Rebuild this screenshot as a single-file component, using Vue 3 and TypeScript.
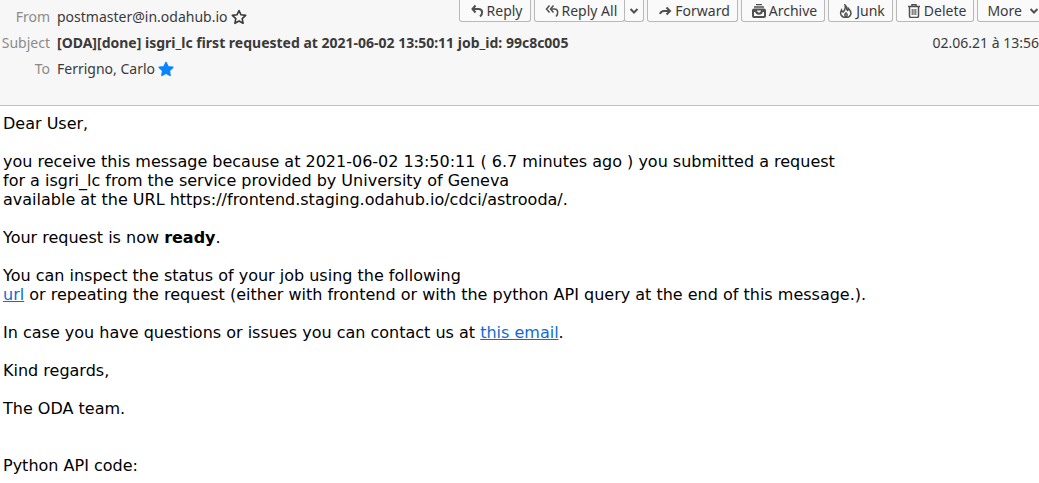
<script setup lang="ts">
interface Action {
  id: string
  label: string
  icon?: string[]
  split?: boolean
  menu?: boolean
}

const actions: Action[] = [
  { id: 'reply', label: 'Reply', icon: ['M5.5 1.5L2.5 5l3 3.5', 'M3 5h5.5c4.500 0 4.500 5 1.500 7.500'] },
  {
    id: 'reply-all',
    label: 'Reply All',
    icon: ['M4.5 1.5L1.5 5l3 3.5', 'M8.5 1.5L5.5 5l3 3.5', 'M6 5h3.5c4 0 4 5 1.500 7.500'],
    split: true,
  },
  { id: 'forward', label: 'Forward', icon: ['M8.5 3.500L12 7l-3.500 3.500', 'M12 7H6Q3 7 2 10'] },
  {
    id: 'archive',
    label: 'Archive',
    icon: ['M4 .5h6', 'M2 3h10', 'M2 5.500h10a1 1 0 0 1 1 1V12a1 1 0 0 1-1 1H2a1 1 0 0 1-1-1V6.500a1 1 0 0 1 1-1z', 'M1.500 7h2.500c.5 3.500 5.500 3.500 6 0h2.500'],
  },
  {
    id: 'junk',
    label: 'Junk',
    icon: ['M6 1c3 2 .5 4 2.500 5.500C9.500 6 9.300 5 9.300 4.300c5 5 2 9.200-2.300 9.200-5 0-6.500-4-4.500-7.500.3 1.500 1 2 1.800 2C5.500 6.500 7 4 6 1z', 'M7 13c-2-1.500-1-3 0-4 1 1 2 2.500 0 4z'],
  },
  {
    id: 'delete',
    label: 'Delete',
    icon: ['M1 2.500h12', 'M5 2.500V.8h4v1.700', 'M2.500 3V12a1.500 1.500 0 0 0 1.500 1.500h6a1.500 1.500 0 0 0 1.500-1.500V3', 'M5.200 5v6M7 5v6M8.800 5v6'],
  },
  { id: 'more', label: 'More', menu: true },
]

const starPath = 'M8 1.5l2 4.300 4.700.6-3.500 3.200.9 4.700L8 12l-4.100 2.300.9-4.700L1.300 6.400 6 5.800z'
</script>

<template>
  <div class="message">
    <header class="header">
      <div class="toolbar" role="toolbar" aria-label="Message actions">
        <div v-for="a in actions" :key="a.id" class="group">
          <button type="button" class="action" :class="a.id">
            <svg v-if="a.icon" class="icon" viewBox="0 0 14 14" aria-hidden="true">
              <path v-for="d in a.icon" :key="d" :d="d" />
            </svg>
            <span>{{ a.label }}</span>
            <svg v-if="a.menu" class="chevron" viewBox="0 0 10 10" aria-hidden="true"><path d="M1.5 3L5 6.5 8.5 3" /></svg>
          </button>
          <button v-if="a.split" type="button" class="action drop" :aria-label="a.label + ' options'">
            <svg class="chevron" viewBox="0 0 10 10" aria-hidden="true"><path d="M1.5 3L5 6.5 8.5 3" /></svg>
          </button>
        </div>
      </div>
      <time class="date" datetime="2021-06-02T13:56">02.06.21 à 13:56</time>
      <dl class="fields">
        <dt>From</dt>
        <dd>
          postmaster@in.odahub.io
          <button type="button" class="star" aria-label="Add to address book">
            <svg viewBox="0 0 16 16"><path :d="starPath" /></svg>
          </button>
        </dd>
        <dt>Subject</dt>
        <dd class="subject">[ODA][done] isgri_lc first requested at 2021-06-02 13:50:11 job_id: 99c8c005</dd>
        <dt>To</dt>
        <dd>
          Ferrigno, Carlo
          <button type="button" class="star known" aria-label="Edit contact">
            <svg viewBox="0 0 16 16"><path :d="starPath" /></svg>
          </button>
        </dd>
      </dl>
    </header>
    <main class="body">
      <p>Dear User,</p>
      <p>
        you receive this message because at 2021-06-02 13:50:11 ( 6.7 minutes ago ) you submitted a request<br />
        for a isgri_lc from the service provided by University of Geneva<br />
        available at the URL https://frontend.staging.odahub.io/cdci/astrooda/.
      </p>
      <p>Your request is now <b>ready</b>.</p>
      <p>
        You can inspect the status of your job using the following<br />
        <a href="#status">url</a> or repeating the request (either with frontend or with the python API query at the end of this message.).
      </p>
      <p>In case you have questions or issues you can contact us at <a href="#contact">this email</a>.</p>
      <p>Kind regards,</p>
      <p>The ODA team.</p>
      <p class="code-title">Python API code:</p>
    </main>
  </div>
</template>

<style>
body {
  margin: 0;
  background: #fff;
}
</style>

<style scoped>
.message {
  overflow: hidden;
}
.header {
  display: grid;
  grid-template-columns: minmax(0, 1fr) auto;
  grid-template-rows: 30px auto;
  background: #f7f7f7;
  border-bottom: 1px solid #c2c2c2;
  color: #3a3a3a;
  font: 14px/26px "Noto Sans", "Open Sans", sans-serif;
}
.fields {
  grid-area: 1 / 1 / 3 / 2;
  display: grid;
  grid-template-columns: 50px minmax(0, 1fr);
  column-gap: 7px;
  grid-auto-rows: 26px;
  margin: 0;
  padding: 4px 0 23px;
  white-space: nowrap;
}
.fields dt {
  color: #8b8b8b;
  text-align: right;
}
.fields dd {
  display: flex;
  align-items: center;
  gap: 3px;
  margin: 0;
}
.fields .subject {
  font-weight: 700;
}
.star {
  display: block;
  width: 16px;
  height: 16px;
  padding: 0;
  border: 0;
  background: none;
}
.star svg {
  display: block;
  fill: none;
  stroke: #3a3a3a;
  stroke-width: 1.6;
  stroke-linejoin: round;
}
.star.known svg {
  fill: #0a84ff;
  stroke: #0a84ff;
}
.toolbar {
  grid-area: 1 / 2;
  justify-self: end;
  display: flex;
  align-items: flex-start;
  gap: 3px;
  height: 22px;
  margin-right: -7px;
}
.group {
  display: flex;
}
.action {
  display: flex;
  align-items: center;
  gap: 3px;
  height: 22px;
  padding: 0 7px 0 10px;
  border: 1px solid #b8b8b8;
  border-top: 0;
  border-radius: 0 0 3px 3px;
  background: #fafafa;
  color: inherit;
  font: inherit;
  line-height: 20px;
  white-space: nowrap;
}
.action.more {
  gap: 7px;
  padding: 0 6px 0 9px;
}
.action.drop {
  margin-left: -1px;
  padding: 0 4px;
}
.icon {
  width: 14px;
  height: 14px;
}
.chevron {
  width: 10px;
  height: 10px;
}
.icon,
.chevron {
  flex: none;
  fill: none;
  stroke: #505050;
  stroke-width: 1.5;
}
.chevron,
.reply .icon,
.forward .icon {
  stroke-width: 2;
}
.archive .icon path:nth-child(n + 3) {
  stroke-width: 2;
}
.delete .icon path:last-child {
  stroke-width: 1;
}
.date {
  grid-area: 2 / 2;
  justify-self: end;
}
.body {
  padding: 8px 3px;
  color: #000;
  font: 16px/19px "DejaVu Sans", sans-serif;
}
.body p {
  margin: 0 0 19px;
}
.body .code-title {
  margin: 38px 0 0;
}
.body a {
  color: #0f6ad6;
}
</style>
